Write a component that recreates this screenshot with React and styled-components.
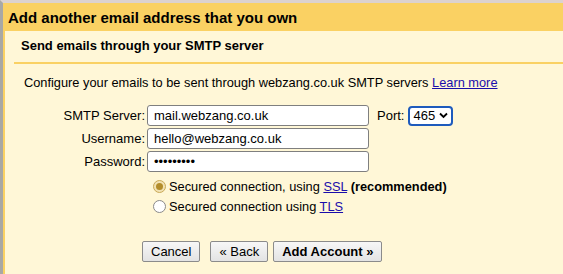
import React from "react";
import styled, { createGlobalStyle } from "styled-components";

const GlobalStyle = createGlobalStyle`
  html, body {
    margin: 0;
    padding: 0;
    background: #fff7d7;
    font-family: "Liberation Sans", Arial, sans-serif;
    color: #000;
  }
`;

const Page = styled.div`
  width: 563px;
  height: 274px;
  overflow: hidden;
  border-top: 3px solid #dcd2cf;
  border-left: 3px solid #a8a8a6;
  box-sizing: border-box;
  display: flex;
  flex-direction: column;
`;

const Header = styled.div`
  background: #fad163;
  height: 28px;
  display: flex;
  align-items: center;
  padding-left: 5px;
  font-size: 15px;
  font-weight: bold;
`;

const Body = styled.div`
  flex: 1;
  background: #fff7d7;
  border-left: 2px solid #fad163;
  padding-left: 9px;
`;

const SubTitle = styled.div`
  font-size: 13px;
  font-weight: bold;
  padding: 7px 0 9px 7px;
  border-bottom: 2px solid #fad163;
`;

const Intro = styled.p`
  font-size: 12.8px;
  margin: 11px 0 0 10px;
`;

const Link = styled.a`
  color: #1a0dab;
  text-decoration: underline;
  cursor: pointer;
`;

const Form = styled.div`
  display: grid;
  grid-template-columns: 131px 222px auto;
  column-gap: 2px;
  row-gap: 2px;
  margin-top: 15px;
  align-items: center;
`;

const Label = styled.label`
  font-size: 13px;
  text-align: right;
`;

const TextInput = styled.input`
  box-sizing: border-box;
  height: 21px;
  width: 222px;
  border: 1px solid #7f7f7f;
  border-radius: 3px;
  background: #fff;
  font-family: inherit;
  font-size: 13px;
  padding: 0 6px;
  outline: none;
`;

const PortGroup = styled.div`
  display: flex;
  align-items: center;
  gap: 4px;
  font-size: 13px;
  padding-left: 6px;
`;

const Select = styled.div`
  box-sizing: border-box;
  height: 20px;
  width: 45px;
  border: 2px solid #1e5bbd;
  border-radius: 4px;
  background: #fff;
  display: flex;
  align-items: center;
  justify-content: space-between;
  padding: 0 3px 0 3px;
  font-size: 13px;
`;

const Radios = styled.div`
  display: flex;
  flex-direction: column;
  gap: 5px;
  margin: 7px 0 0 139px;
`;

const RadioRow = styled.div`
  display: flex;
  align-items: center;
  gap: 3px;
  font-size: 12.8px;
`;

const RadioDot = styled.span`
  box-sizing: border-box;
  width: 13px;
  height: 13px;
  border-radius: 50%;
  border: 1px solid ${(p) => (p.checked ? "#c9a957" : "#8a8a8a")};
  background: ${(p) => (p.checked ? "#f2e2b4" : "#fff")};
  display: flex;
  align-items: center;
  justify-content: center;
  &::after {
    content: "";
    display: ${(p) => (p.checked ? "block" : "none")};
    width: 7px;
    height: 7px;
    border-radius: 50%;
    background: #b38d2b;
  }
`;

const Buttons = styled.div`
  display: flex;
  gap: 5px;
  margin: 27px 0 0 128px;
`;

const Button = styled.button`
  height: 21px;
  border: 1px solid #8b8b8b;
  border-radius: 2px;
  background: linear-gradient(#f7f7f7, #e3e3e3);
  font-family: inherit;
  font-size: 13px;
  font-weight: ${(p) => (p.primary ? "bold" : "normal")};
  padding: 0 ${(p) => p.pad || 8}px;
  margin-left: ${(p) => p.gap || 0}px;
  color: #000;
`;

const Chevron = () => (
  <svg width="9" height="7" viewBox="0 0 9 7">
    <path d="M1 1.5 L4.5 5 L8 1.5" fill="none" stroke="#000" strokeWidth="1.8" />
  </svg>
);

export default function App() {
  return (
    <Page>
      <GlobalStyle />
      <Header>Add another email address that you own</Header>
      <Body>
        <SubTitle>Send emails through your SMTP server</SubTitle>
        <Intro>
          Configure your emails to be sent through webzang.co.uk SMTP servers{" "}
          <Link>Learn more</Link>
        </Intro>
        <Form>
          <Label>SMTP Server:</Label>
          <TextInput defaultValue="mail.webzang.co.uk" />
          <PortGroup>
            Port:
            <Select>
              465
              <Chevron />
            </Select>
          </PortGroup>
          <Label>Username:</Label>
          <TextInput defaultValue="hello@webzang.co.uk" />
          <span />
          <Label>Password:</Label>
          <TextInput type="password" defaultValue="webzang12" />
          <span />
        </Form>
        <Radios>
          <RadioRow>
            <RadioDot checked />
            <span>
              Secured connection, using <Link>SSL</Link> <b>(recommended)</b>
            </span>
          </RadioRow>
          <RadioRow>
            <RadioDot />
            <span>
              Secured connection using <Link>TLS</Link>
            </span>
          </RadioRow>
        </Radios>
        <Buttons>
          <Button>Cancel</Button>
          <Button gap={5}>« Back</Button>
          <Button primary>Add Account »</Button>
        </Buttons>
      </Body>
    </Page>
  );
}
